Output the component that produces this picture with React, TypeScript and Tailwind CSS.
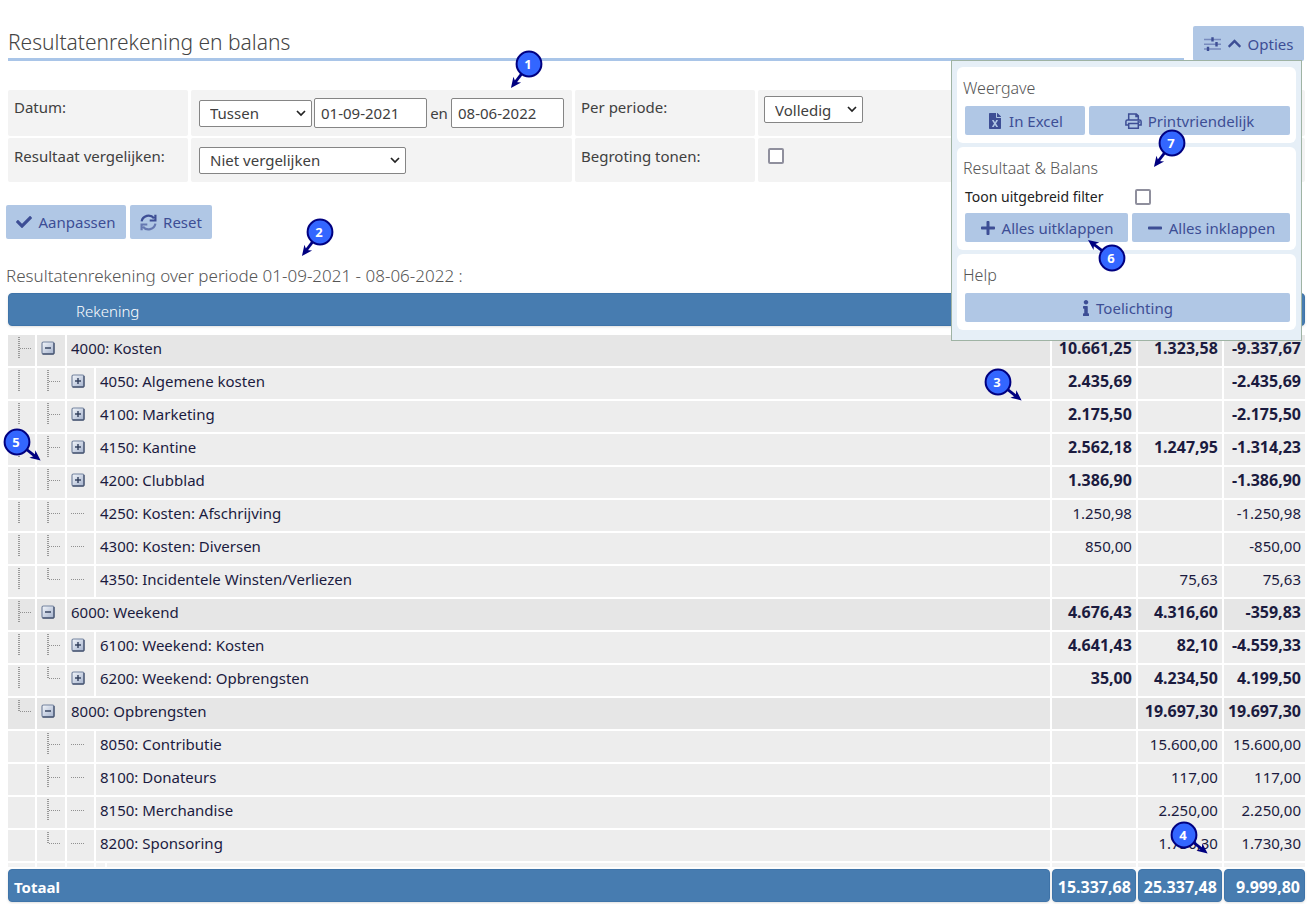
import React from "react";
import {
  FaCheck,
  FaChevronUp,
  FaFileExcel,
  FaInfo,
  FaMinus,
  FaPlus,
} from "react-icons/fa";

type Branch = "tee" | "line" | "end" | "dash" | "plus" | "minus" | "none";

type Row = {
  tree: Branch[];
  name: string;
  amounts: [string, string, string];
  bold?: boolean;
};

const rows: Row[] = [
  { tree: ["tee", "minus"], name: "4000: Kosten", amounts: ["10.661,25", "1.323,58", "-9.337,67"], bold: true },
  { tree: ["line", "tee", "plus"], name: "4050: Algemene kosten", amounts: ["2.435,69", "", "-2.435,69"], bold: true },
  { tree: ["line", "tee", "plus"], name: "4100: Marketing", amounts: ["2.175,50", "", "-2.175,50"], bold: true },
  { tree: ["line", "tee", "plus"], name: "4150: Kantine", amounts: ["2.562,18", "1.247,95", "-1.314,23"], bold: true },
  { tree: ["line", "tee", "plus"], name: "4200: Clubblad", amounts: ["1.386,90", "", "-1.386,90"], bold: true },
  { tree: ["line", "tee", "dash"], name: "4250: Kosten: Afschrijving", amounts: ["1.250,98", "", "-1.250,98"] },
  { tree: ["line", "tee", "dash"], name: "4300: Kosten: Diversen", amounts: ["850,00", "", "-850,00"] },
  { tree: ["line", "end", "dash"], name: "4350: Incidentele Winsten/Verliezen", amounts: ["", "75,63", "75,63"] },
  { tree: ["tee", "minus"], name: "6000: Weekend", amounts: ["4.676,43", "4.316,60", "-359,83"], bold: true },
  { tree: ["line", "tee", "plus"], name: "6100: Weekend: Kosten", amounts: ["4.641,43", "82,10", "-4.559,33"], bold: true },
  { tree: ["line", "end", "plus"], name: "6200: Weekend: Opbrengsten", amounts: ["35,00", "4.234,50", "4.199,50"], bold: true },
  { tree: ["end", "minus"], name: "8000: Opbrengsten", amounts: ["", "19.697,30", "19.697,30"], bold: true },
  { tree: ["none", "tee", "dash"], name: "8050: Contributie", amounts: ["", "15.600,00", "15.600,00"] },
  { tree: ["none", "tee", "dash"], name: "8100: Donateurs", amounts: ["", "117,00", "117,00"] },
  { tree: ["none", "tee", "dash"], name: "8150: Merchandise", amounts: ["", "2.250,00", "2.250,00"] },
  { tree: ["none", "end", "dash"], name: "8200: Sponsoring", amounts: ["", "1.730,30", "1.730,30"] },
];

const TreeCell: React.FC<{ kind: Branch }> = ({ kind }) => {
  if (kind === "none") return null;
  if (kind === "plus" || kind === "minus") {
    return (
      <button
        className="block pl-1"
        aria-label={kind === "plus" ? "Uitklappen" : "Inklappen"}
      >
        <svg width="14" height="14" viewBox="0 0 14 14" className="block">
          <defs>
            <linearGradient id="toggle" x1="0" y1="0" x2="1" y2="1">
              <stop offset="0" stopColor="#f4f7fb" />
              <stop offset="1" stopColor="#a3b1cc" />
            </linearGradient>
          </defs>
          <rect x="1" y="1" width="12" height="12" rx="1.5" fill="url(#toggle)" stroke="#75849f" strokeWidth="1.2" />
          <path d="M1.5 13h10.8l.7-.7V2" fill="none" stroke="#4b5874" strokeWidth="1.3" />
          <path d="M4 7h6" stroke="#2f3d5a" strokeWidth="1.4" />
          {kind === "plus" && <path d="M7 4v6" stroke="#2f3d5a" strokeWidth="1.4" />}
        </svg>
      </button>
    );
  }
  return (
    <svg width="27" height="24" viewBox="0 0 27 24" className="block" fill="none" stroke="#909090" strokeDasharray="1 1">
      {(kind === "tee" || kind === "line") && <path d="M11 1v22" strokeWidth="1.8" />}
      {kind === "end" && <path d="M11 1v12" strokeWidth="1.8" />}
      {(kind === "tee" || kind === "end") && <path d="M12 12.5h11" />}
      {kind === "dash" && <path d="M4 12.5h13" />}
    </svg>
  );
};

const arrows = {
  sw: "rotate(127)",
  se: "rotate(38)",
  nw: "rotate(217)",
};

const Marker: React.FC<{ n: number; to: keyof typeof arrows; className: string }> = ({ n, to, className }) => (
  <div className={`pointer-events-none absolute z-30 flex h-16 w-16 items-center justify-center ${className}`}>
    <svg viewBox="-32 -32 64 64" className="absolute inset-0">
      <g transform={arrows[to]}>
        <path d="M12 0H24" stroke="#000080" strokeWidth="2.8" />
        <path d="M30 0L19.5 4.8L22.5 0L19.5 -4.8Z" fill="#000080" />
      </g>
      <circle r="12.4" fill="#3366ff" stroke="#000080" strokeWidth="2" />
    </svg>
    <span className="relative pr-0.5 pb-px text-[13px] leading-4 font-bold text-white">{n}</span>
  </div>
);

const SlidersIcon = () => (
  <svg width="17" height="14" viewBox="0 0 17 14" fill="none" stroke="#3d4e95">
    <path d="M0 2.5h17M0 7.2h17M0 12h17" strokeWidth="1.6" opacity=".5" />
    <path d="M8.5 .3v4.2M12.5 5v4.4M4 9.8v4.2" strokeWidth="2.4" />
  </svg>
);

const SyncIcon = () => (
  <svg width="17" height="17" viewBox="0 0 17 17" fill="none" stroke="#3d4e95" strokeWidth="2.2">
    <path d="M1.6 7.4A7 7 0 0 1 14 4.3M15.4 .8v5.7H9.7" />
    <path d="M15.4 9.6A7 7 0 0 1 3 12.7M1.6 16.2v-5.7h5.7" opacity=".65" />
  </svg>
);

const PrintIcon = () => (
  <svg width="17" height="16" viewBox="0 0 17 16" fill="none" stroke="#3d4e95" strokeWidth="1.5">
    <path d="M3.7 7V.9h7.6l2 2V7M11 1v2.4h2.3" />
    <path d="M3.5 12H.9V8.6q0-1.6 1.6-1.6h12q1.6 0 1.6 1.6V12h-2.6" />
    <path d="M3.7 10.4h9.6v4.8H3.7z" />
    <circle cx="13.6" cy="9" r=".5" />
  </svg>
);

const Button: React.FC<{ className: string; children: React.ReactNode }> = ({ className, children }) => (
  <button
    className={`flex items-center justify-center gap-[6px] rounded-xs bg-[#b0c7e5] text-[15px] whitespace-nowrap text-[#3d4e95] hover:bg-[#a1bbdd] ${className}`}
  >
    {children}
  </button>
);

const Select: React.FC<{ id: string; value: string; className: string }> = ({ id, value, className }) => (
  <span className={`relative block h-[27px] ${className}`}>
    <select
      id={id}
      className="block h-full w-full appearance-none rounded-xs border border-[#858585] bg-white pl-[10px] text-[15px] leading-5"
    >
      <option>{value}</option>
    </select>
    <svg width="10" height="7" viewBox="0 0 10 7" className="pointer-events-none absolute top-[10px] right-[6px]">
      <path d="M1 1l4 4 4-4" fill="none" stroke="#222" strokeWidth="1.7" />
    </svg>
  </span>
);

const Checkbox: React.FC<{ id: string }> = ({ id }) => (
  <input
    id={id}
    type="checkbox"
    className="block h-4 w-4 appearance-none rounded-xs border-2 border-[#8f8f9d] bg-white checked:bg-[#3d4e95]"
  />
);

const Card: React.FC<{ title: string; children: React.ReactNode }> = ({ title, children }) => (
  <section className="rounded-md bg-white pt-[7px] pr-[6px] pb-2 pl-2">
    <h2 className="-ml-0.5 h-8 text-base leading-7 font-light text-[#555]">{title}</h2>
    {children}
  </section>
);

const OptionsPanel = () => (
  <div className="absolute top-[60px] right-[5px] z-20 flex w-[351px] flex-col gap-1 border border-[#9fb3a4] bg-[#e6eff7] px-[5px] pt-[6px] pb-[10px]">
    <Card title="Weergave">
      <div className="flex gap-1">
        <Button className="h-[29px] w-[120px]">
          <FaFileExcel size={16} />
          In Excel
        </Button>
        <Button className="h-[29px] flex-1">
          <PrintIcon />
          Printvriendelijk
        </Button>
      </div>
    </Card>
    <Card title="Resultaat &amp; Balans">
      <div className="flex h-[27px] items-start pt-[3px]">
        <label htmlFor="uitgebreid" className="w-[170px] text-sm leading-4 text-[#222]">
          Toon uitgebreid filter
        </label>
        <Checkbox id="uitgebreid" />
      </div>
      <div className="flex gap-1">
        <Button className="h-[29px] w-[163px]">
          <FaPlus size={16} />
          Alles uitklappen
        </Button>
        <Button className="h-[29px] flex-1">
          <FaMinus size={16} />
          Alles inklappen
        </Button>
      </div>
    </Card>
    <Card title="Help">
      <Button className="h-[29px] w-full">
        <FaInfo className="h-4 w-2" />
        Toelichting
      </Button>
    </Card>
  </div>
);

const field = "h-[30px] w-[113px] rounded-xs border border-[#858585] bg-white px-[6px] text-[15px]";
const filterCell = "rounded-xs bg-[#f3f3f3] px-[6px]";
const headCell = "rounded-sm bg-[#477cb0] text-white shadow-sm border border-[#3f74a9]";

const App: React.FC = () => {
  return (
    <div className="relative min-h-screen overflow-hidden bg-white pl-[6px] font-['Noto_Sans','Open_Sans',sans-serif] text-[15px] leading-6 text-[#404040]">
      <header className="flex items-end pt-[26px] pr-[3px] pl-0.5">
        <h1 className="mr-[9px] flex-1 border-b-[3px] border-[#a9c5e8] pb-0.5 text-[21px] leading-7 font-light text-[#444]">
          Resultatenrekening en balans
        </h1>
        <Button className="h-[35px] w-[111px]">
          <SlidersIcon />
          <FaChevronUp size={15} />
          Opties
        </Button>
      </header>

      <OptionsPanel />

      <form className="mt-[29px] grid grid-cols-[180px_381px_180px_1fr] grid-rows-[46px_44px] gap-x-[3px] gap-y-[2px] pr-0.5 pl-0.5">
        <label htmlFor="datum" className={`${filterCell} pt-[5px]`}>
          Datum:
        </label>
        <div className={`${filterCell} flex items-center gap-0.5 pl-2`}>
          <Select id="datum" value="Tussen" className="w-[113px]" />
          <input aria-label="Datum van" defaultValue="01-09-2021" className={field} />
          <span className="w-5 text-center">en</span>
          <input aria-label="Datum tot" defaultValue="08-06-2022" className={field} />
        </div>
        <label htmlFor="periode" className={`${filterCell} pt-[5px]`}>
          Per periode:
        </label>
        <div className={`${filterCell} pt-[6px]`}>
          <Select id="periode" value="Volledig" className="w-[99px]" />
        </div>
        <label htmlFor="vergelijken" className={`${filterCell} pt-[6px]`}>
          Resultaat vergelijken:
        </label>
        <div className={`${filterCell} flex items-center pl-2`}>
          <Select id="vergelijken" value="Niet vergelijken" className="w-[207px]" />
        </div>
        <label htmlFor="begroting" className={`${filterCell} pt-[6px]`}>
          Begroting tonen:
        </label>
        <div className={`${filterCell} pt-[10px] pl-[10px]`}>
          <Checkbox id="begroting" />
        </div>
      </form>

      <div className="mt-[23px] flex gap-1">
        <Button className="h-[34px] w-[120px]">
          <FaCheck size={16} />
          Aanpassen
        </Button>
        <Button className="h-[34px] w-[82px]">
          <SyncIcon />
          Reset
        </Button>
      </div>

      <h2 className="mt-[22px] text-[17px] leading-[30px] font-light text-[#555]">
        Resultatenrekening over periode 01-09-2021 - 08-06-2022 :
      </h2>

      <table className="w-full table-fixed border-separate border-spacing-[2px] text-[#1b1b3f]">
        <colgroup>
          <col className="w-[27px]" />
          <col className="w-[28px]" />
          <col className="w-[27px]" />
          <col className="w-[9px]" />
          <col />
          <col className="w-[84px]" />
          <col className="w-[84px]" />
          <col className="w-[81px]" />
        </colgroup>
        <thead>
          <tr className="h-[33px]">
            <th colSpan={8} className={`${headCell} pt-0.5 pb-0 pl-[67px] text-left font-light`}>
              Rekening
            </th>
          </tr>
          <tr className="h-[5px]" />
        </thead>
        <tbody>
          {rows.map(({ tree, name, amounts, bold }) => {
            const bg = tree.length === 2 ? "bg-[#e6e6e6]" : "bg-[#ededed]";
            return (
              <tr key={name} className="h-[31px]">
                {tree.map((kind, i) => (
                  <td key={i} className={`${bg} p-0 pb-1.5`}>
                    <TreeCell kind={kind} />
                  </td>
                ))}
                <td colSpan={5 - tree.length} className={`${bg} px-1 pt-0 pb-1.5`}>
                  {name}
                </td>
                {amounts.map((amount, i) => (
                  <td key={i} className={`${bg} px-1 pt-0 pb-1.5 text-right ${bold ? "text-base font-bold" : ""}`}>
                    {amount}
                  </td>
                ))}
              </tr>
            );
          })}
          <tr className="h-1">
            {Array.from({ length: 8 }, (_, i) => (
              <td key={i} className="bg-[#f3f3f3] p-0" />
            ))}
          </tr>
        </tbody>
        <tfoot>
          <tr className="h-[33px] font-bold">
            <td colSpan={5} className={`${headCell} px-[5px] pt-0.5 pb-0`}>
              Totaal
            </td>
            <td className={`${headCell} px-1 pt-0.5 pb-0 text-right text-base`}>15.337,68</td>
            <td className={`${headCell} px-1 pt-0.5 pb-0 text-right text-base`}>25.337,48</td>
            <td className={`${headCell} px-1 pt-0.5 pb-0 text-right text-base`}>9.999,80</td>
          </tr>
        </tfoot>
      </table>

      <Marker n={1} to="sw" className="top-8 left-[497px]" />
      <Marker n={2} to="sw" className="top-[200px] left-72" />
      <Marker n={3} to="se" className="top-[350px] right-[277px]" />
      <Marker n={4} to="se" className="top-[803px] right-[91px]" />
      <Marker n={5} to="se" className="top-[410px] -left-[15px]" />
      <Marker n={6} to="nw" className="top-[226px] right-[163px]" />
      <Marker n={7} to="sw" className="top-[111px] right-[103px]" />
    </div>
  );
};

export default App;
